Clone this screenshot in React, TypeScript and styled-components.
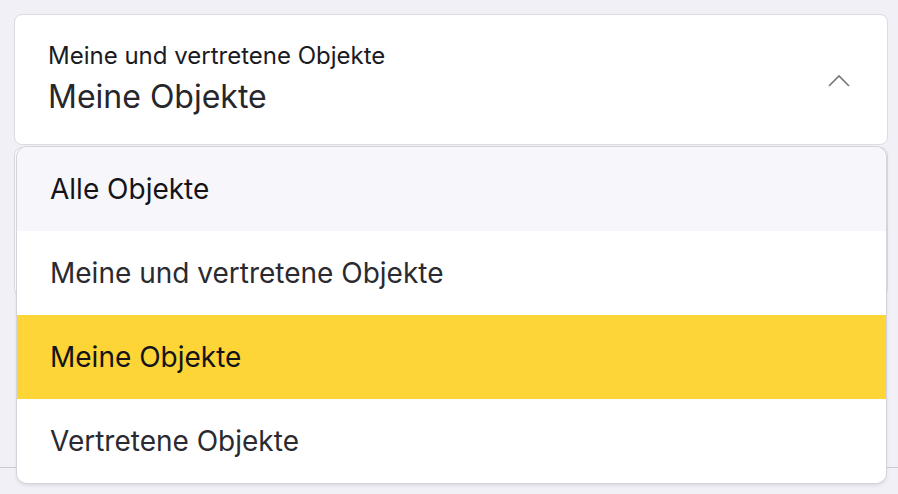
import styled, { createGlobalStyle } from 'styled-components';

const GlobalStyle = createGlobalStyle`
  html, body {
    margin: 0;
    padding: 0;
    background: #f0f0f6;
    font-family: Inter, "Noto Sans", sans-serif;
  }
`;

const Page = styled.div`
  position: relative;
  width: 898px;
  height: 494px;
  padding: 14px 10px 0 14px;
  box-sizing: border-box;
  overflow: hidden;
`;

const SelectBox = styled.div`
  display: flex;
  align-items: center;
  justify-content: space-between;
  height: 131px;
  box-sizing: border-box;
  padding: 0 36px 2px 33px;
  background: #fff;
  border: 1px solid #dcdce3;
  border-radius: 8px;
`;

const SelectText = styled.div`
  display: flex;
  flex-direction: column;
  gap: 7px;
`;

const Label = styled.span`
  font-size: 24px;
  line-height: 29px;
  color: #1b1b1f;
`;

const Value = styled.span`
  font-size: 32px;
  line-height: 39px;
  color: #26262b;
`;

const ChevronWrap = styled.span`
  display: flex;
  margin-top: 4px;
`;

const NextCard = styled.div`
  margin-top: 2px;
  height: 148px;
  background: #fff;
  border: 1px solid #dcdce3;
  border-radius: 8px;
`;

const Divider = styled.div`
  position: absolute;
  left: 0;
  right: 0;
  top: 467px;
  border-top: 1px solid #c9c9d1;
`;

const Menu = styled.ul`
  position: absolute;
  top: 147px;
  left: 17px;
  width: 869px;
  margin: 0;
  padding: 0;
  list-style: none;
  background: #fff;
  border-radius: 10px;
  overflow: hidden;
  box-shadow: 0 0 0 1px #d4d4dc, 0 2px 4px rgba(0, 0, 0, 0.12);
`;

const Option = styled.li<{ $tone: 'hover' | 'selected' | 'plain' }>`
  display: flex;
  align-items: center;
  height: 84px;
  padding-left: 33px;
  font-size: 28px;
  color: ${({ $tone }) => ($tone === 'plain' ? '#2a2a30' : '#141418')};
  background: ${({ $tone }) =>
    $tone === 'selected' ? '#fdd536' : $tone === 'hover' ? '#f7f7fb' : '#fff'};
`;

const Chevron = () => (
  <svg width="24" height="14" viewBox="0 0 24 14" fill="none">
    <polyline points="2,12 12,2 22,12" stroke="#77777d" strokeWidth="1.6" />
  </svg>
);

const options = [
  { label: 'Alle Objekte', tone: 'hover' as const },
  { label: 'Meine und vertretene Objekte', tone: 'plain' as const },
  { label: 'Meine Objekte', tone: 'selected' as const },
  { label: 'Vertretene Objekte', tone: 'plain' as const },
];

const App = () => (
  <>
    <GlobalStyle />
    <Page>
      <SelectBox>
        <SelectText>
          <Label>Meine und vertretene Objekte</Label>
          <Value>Meine Objekte</Value>
        </SelectText>
        <ChevronWrap>
          <Chevron />
        </ChevronWrap>
      </SelectBox>
      <NextCard />
      <Divider />
      <Menu>
        {options.map((o) => (
          <Option key={o.label} $tone={o.tone}>
            {o.label}
          </Option>
        ))}
      </Menu>
    </Page>
  </>
);

export default App;
